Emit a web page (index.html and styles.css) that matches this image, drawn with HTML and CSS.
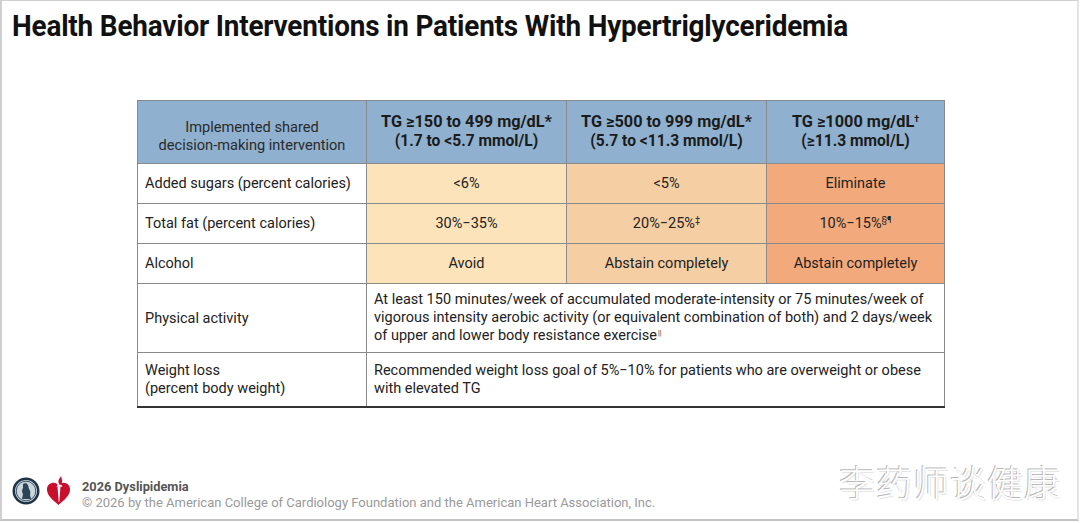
FILE: index.html
```html
<!DOCTYPE html>
<html>
<head>
<meta charset="utf-8">
<link rel="stylesheet" href="styles.css">
</head>
<body>
<div class="frame">
  <h1 class="title">Health Behavior Interventions in Patients With Hypertriglyceridemia</h1>
  <div class="table-wrap">
    <table class="grid">
      <colgroup>
        <col class="c0"><col class="c1"><col class="c2"><col class="c3">
      </colgroup>
      <thead>
        <tr class="head">
          <th class="lead">Implemented shared<br>decision-making intervention</th>
          <th><span class="h1">TG ≥150 to 499 mg/dL*</span><br><span class="h2">(1.7 to &lt;5.7 mmol/L)</span></th>
          <th><span class="h1">TG ≥500 to 999 mg/dL*</span><br><span class="h2">(5.7 to &lt;11.3 mmol/L)</span></th>
          <th><span class="h1">TG ≥1000 mg/dL<sup>†</sup></span><br><span class="h2">(≥11.3 mmol/L)</span></th>
        </tr>
      </thead>
      <tbody>
        <tr class="r40">
          <td class="label">Added sugars (percent calories)</td>
          <td class="t1">&lt;6%</td>
          <td class="t2">&lt;5%</td>
          <td class="t3">Eliminate</td>
        </tr>
        <tr class="r40">
          <td class="label">Total fat (percent calories)</td>
          <td class="t1">30%−35%</td>
          <td class="t2">20%−25%<sup>‡</sup></td>
          <td class="t3">10%−15%<sup>§¶</sup></td>
        </tr>
        <tr class="r40">
          <td class="label">Alcohol</td>
          <td class="t1">Avoid</td>
          <td class="t2">Abstain completely</td>
          <td class="t3">Abstain completely</td>
        </tr>
        <tr class="r69">
          <td class="label">Physical activity</td>
          <td class="wide" colspan="3">At least 150 minutes/week of accumulated moderate-intensity or 75 minutes/week of vigorous intensity aerobic activity (or equivalent combination of both) and 2 days/week of upper and lower body resistance exercise<sup class="pipe">||</sup></td>
        </tr>
        <tr class="r54 last">
          <td class="label">Weight loss<br>(percent body weight)</td>
          <td class="wide" colspan="3">Recommended weight loss goal of 5%−10% for patients who are overweight or obese with elevated TG</td>
        </tr>
      </tbody>
    </table>
  </div>
  <footer class="foot">
    <div class="logos">
      <svg class="acc" width="28" height="28" viewBox="0 0 28 28">
        <circle cx="14" cy="14" r="13.5" fill="#1f3346"/>
        <circle cx="14" cy="14" r="11" fill="#c9d6df"/>
        <circle cx="14" cy="14" r="9.8" fill="none" stroke="#1f3346" stroke-width="0.8"/>
        <path d="M11 7 Q14 5 16 8 L17 12 Q19 14 18 18 L19 22 L10 22 L11 17 Q9 14 11 11 Z" fill="#2d4456"/>
        <circle cx="13.5" cy="8" r="1.8" fill="#2d4456"/>
      </svg>
      <svg class="aha" width="25" height="31" viewBox="0 0 26 32">
        <path d="M13 31 C7 26 1 21 1 15 C1 10 5 8 8 8 C10.5 8 12 9.5 13 11 C14 9.5 15.5 8 18 8 C21 8 25 10 25 15 C25 21 19 26 13 31 Z" fill="#c8102e"/>
        <path d="M12 12 L15 12 L13.8 28 L13.2 28 Z" fill="#fff"/>
        <path d="M11 12 L17 12 L16 10 L12 10 Z" fill="#fff"/>
        <path d="M14 9.5 C12 7 13 4 16 1 C15.5 4 18 5 16 9.5 Z" fill="#c8102e"/>
      </svg>
    </div>
    <div class="credits">
      <div class="topic">2026 Dyslipidemia</div>
      <div class="copy">© 2026 by the American College of Cardiology Foundation and the American Heart Association, Inc.</div>
    </div>
    <div class="mark">李药师谈健康</div>
  </footer>
</div>
</body>
</html>
```

FILE: styles.css
```css
html, body {
  margin: 0;
  padding: 0;
  background: #ffffff;
}
.frame {
  width: 1075px;
  height: 518px;
  border: 1px solid #cfcfcf;
  border-left-width: 2px;
  border-bottom: 2px solid #c4c4c4;
  border-right: 2px solid #e4e4e4;
  box-sizing: content-box;
  position: relative;
  font-family: Roboto, "Noto Sans", sans-serif;
  color: #222;
  display: flex;
  flex-direction: column;
}
.title {
  margin: 7px 0 0 10px;
  font-family: Roboto, "Liberation Sans", sans-serif;
  font-weight: 700;
  font-size: 30px;
  line-height: 36px;
  color: #111;
  letter-spacing: -0.2px;
  transform-origin: left center;
  transform: scaleX(0.93);
  white-space: nowrap;
}
.table-wrap {
  margin: 56px 0 0 135px;
}
.grid {
  border-collapse: collapse;
  table-layout: fixed;
  width: 807px;
  font-size: 14.5px;
  color: #222;
}
.c0 { width: 229px; }
.c1 { width: 200px; }
.c2 { width: 200px; }
.c3 { width: 178px; }
.grid th, .grid td {
  border: 1px solid #8a8a8a;
  padding: 0 7px;
  vertical-align: middle;
}
.head th {
  height: 62px;
  background: #8fb1cf;
  text-align: center;
  color: #1b1b1b;
  line-height: 18px;
}
.head th.lead {
  font-weight: 400;
  font-size: 14.6px;
  color: #2a2a2a;
  padding-top: 8px;
  height: 54px;
}
.h1 { font-weight: 700; font-size: 16.3px; }
.h2 { font-weight: 700; font-size: 15.6px; }
.head sup { font-size: 9px; vertical-align: 7px; line-height: 0; }
.r40 td { height: 39px; }
.r69 td { height: 68px; }
.r54 td { height: 53px; }
.label { background: #fff; text-align: left; }
.t1 { background: #fde3b9; text-align: center; }
.t2 { background: #f5cfa3; text-align: center; }
.t3 { background: #f2aa7c; text-align: center; }
.grid sup { font-size: 9px; vertical-align: 5px; line-height: 0; }
.grid sup.pipe {
  display: inline-block;
  font-size: 7px;
  line-height: 7px;
  vertical-align: 5px;
  margin-left: 1px;
}
.wide { background: #fff; text-align: left; line-height: 18px; }
.last td { border-bottom: 2px solid #333; }
.r54 .wide, .r54 .label { line-height: 18px; }

.foot {
  margin-top: auto;
  height: 50px;
  display: flex;
  align-items: flex-start;
  position: relative;
}
.logos {
  display: flex;
  align-items: center;
  gap: 6px;
  margin: 6px 0 0 10px;
}
.credits {
  margin: 10px 0 0 11px;
}
.topic {
  font-size: 12.8px;
  font-weight: 700;
  color: #555;
  line-height: 16px;
}
.copy {
  font-size: 13px;
  color: #9a9a9a;
  line-height: 16px;
}
.mark {
  position: absolute;
  right: 16px;
  top: -14px;
  font-family: "Noto Sans CJK SC", sans-serif;
  font-weight: 300;
  font-size: 36px;
  letter-spacing: 1px;
  color: #ffffff;
  text-shadow: -1px -1px 0 #b8b8b8, 1px 1px 0 #e6e6e6;
}
```
